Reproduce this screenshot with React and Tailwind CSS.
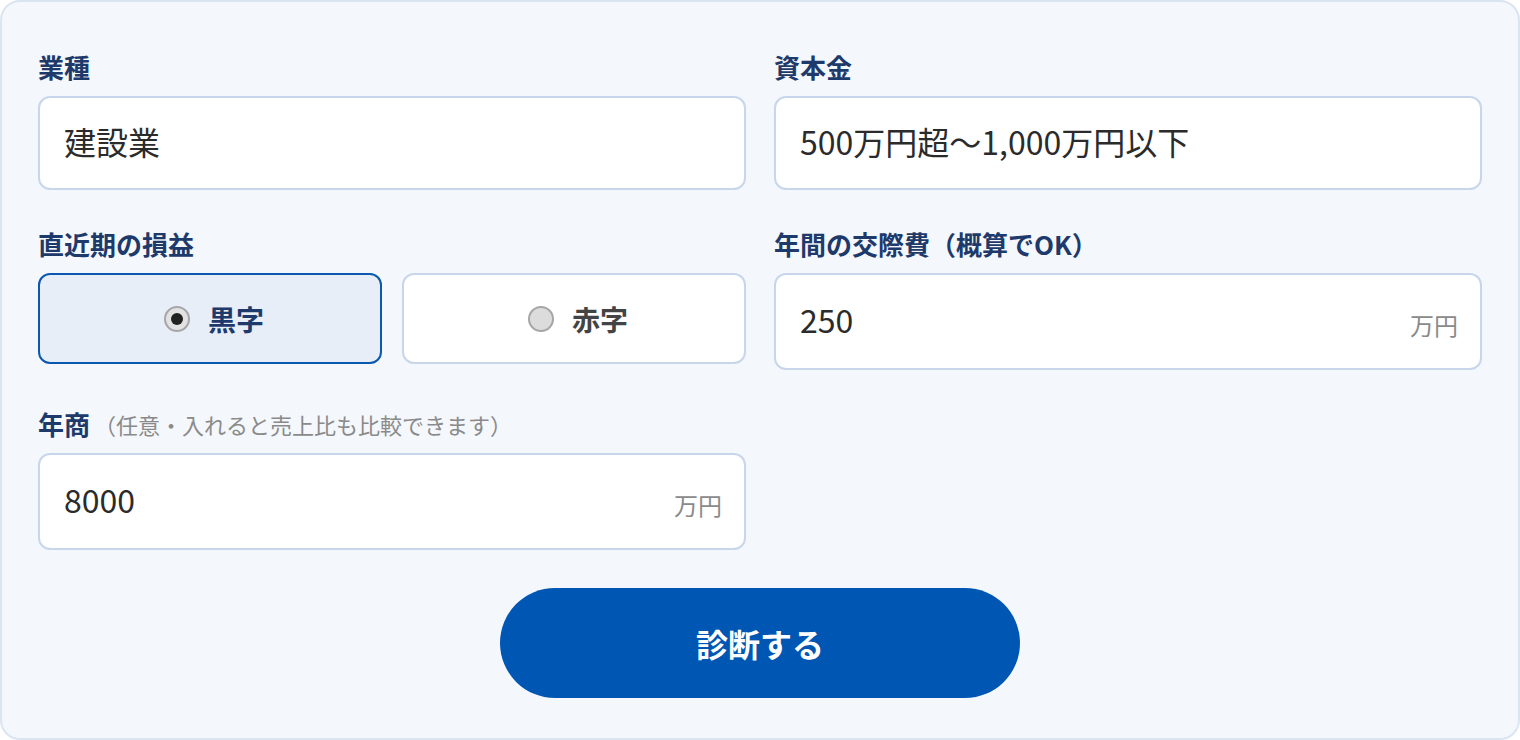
import React from "react";

function Label({ children, hint }) {
  return (
    <div className="flex items-center h-[26px] mb-4">
      <span className="text-[26px] leading-[26px] font-bold text-[#1e3a6b]">{children}</span>
      {hint && (
        <span className="ml-[4px] text-[22px] leading-[26px] text-[#8a8a8a]">{hint}</span>
      )}
    </div>
  );
}

function SelectBox({ value }) {
  return (
    <div className="h-[94px] bg-white border-2 border-[#c7d6ea] rounded-[12px] flex items-center pl-6 pr-6 pb-[5px]">
      <span className="text-[32px] leading-none text-[#2b2b2b]">{value}</span>
    </div>
  );
}

function UnitInput({ value }) {
  return (
    <div className="h-[97px] bg-white border-2 border-[#c7d6ea] rounded-[12px] flex items-center pl-6 pr-[22px] pb-[5px]">
      <span className="flex-1 text-[32px] leading-none text-[#2b2b2b]">{value}</span>
      <span className="text-[24px] leading-none text-[#8a8a8a] mt-[12px]">万円</span>
    </div>
  );
}

function Radio({ label, selected }) {
  return (
    <div
      className={
        "h-[91px] rounded-[12px] border-2 flex items-center justify-center gap-[18px] pl-2 " +
        (selected ? "bg-[#e8eef7] border-[#0a58b0]" : "bg-white border-[#c7d6ea]")
      }
    >
      <div
        className={
          "w-[26px] h-[26px] rounded-full border-2 border-[#a6a6a6] flex items-center justify-center " +
          (selected ? "bg-[#e2e2e2]" : "bg-[#dcdcdc]")
        }
      >
        {selected && <div className="w-[12px] h-[12px] rounded-full bg-[#222222]" />}
      </div>
      <span
        className={
          "text-[28px] leading-none font-bold " + (selected ? "text-[#1e3a6b]" : "text-[#444444]")
        }
      >
        {label}
      </span>
    </div>
  );
}

export default function App() {
  return (
    <div
      className="w-[1520px] h-[740px] bg-[#f4f7fc] border-2 border-[#dbe5f2] rounded-[20px] px-9 pt-[52px]"
      style={{ fontFamily: '"Noto Sans CJK JP", "Noto Sans", sans-serif' }}
    >
      <div className="grid grid-cols-2 gap-x-[28px] gap-y-[41px] items-start">
        <div>
          <Label>業種</Label>
          <SelectBox value="建設業" />
        </div>
        <div>
          <Label>資本金</Label>
          <SelectBox value="500万円超～1,000万円以下" />
        </div>
        <div>
          <Label>直近期の損益</Label>
          <div className="grid grid-cols-2 gap-5">
            <Radio label="黒字" selected />
            <Radio label="赤字" />
          </div>
        </div>
        <div>
          <Label>年間の交際費（概算でOK）</Label>
          <UnitInput value="250" />
        </div>
        <div>
          <Label hint="（任意・入れると売上比も比較できます）">年商</Label>
          <UnitInput value="8000" />
        </div>
        <div />
      </div>
      <div className="flex justify-center mt-[38px]">
        <button className="w-[520px] h-[110px] rounded-full bg-[#0057b3] text-white text-[32px] font-bold leading-none">
          診断する
        </button>
      </div>
    </div>
  );
}
